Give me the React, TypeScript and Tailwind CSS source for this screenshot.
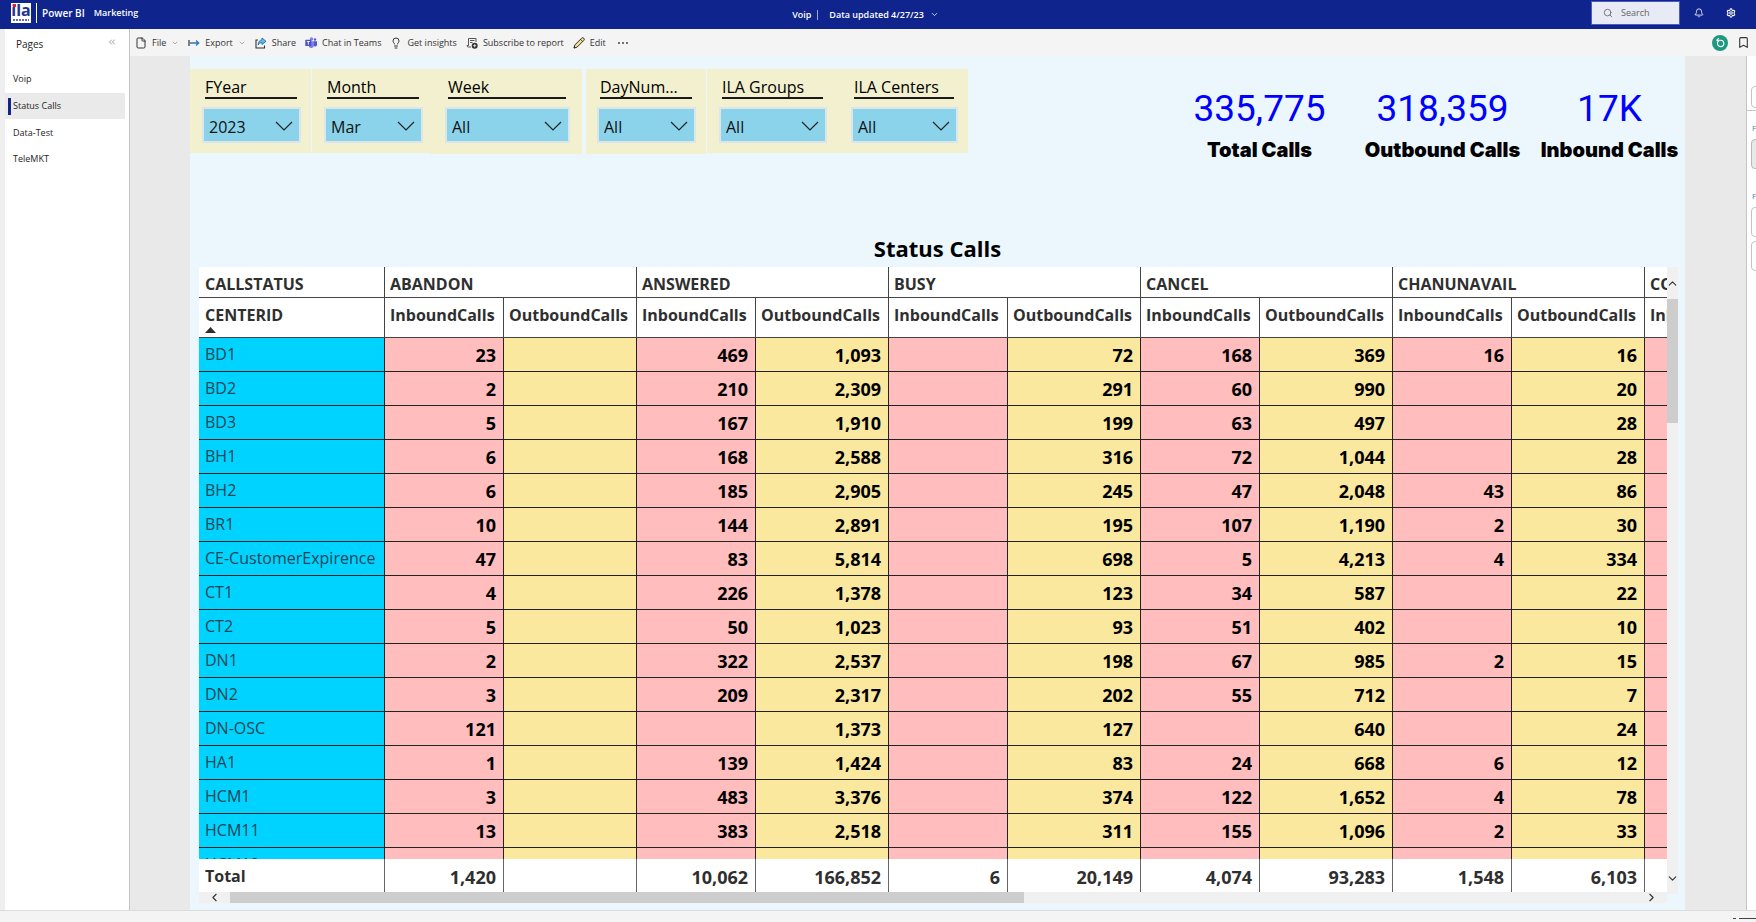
import type { ReactNode } from "react";
import { Bell, Bookmark, ChevronDown, ChevronLeft, ChevronRight, ChevronsLeft, ChevronUp, File, Lightbulb, Search, Settings } from "lucide-react";

const statuses = ["ABANDON", "ANSWERED", "BUSY", "CANCEL", "CHANUNAVAIL", "CONGESTION"];

const rows: [string, string[]][] = [
  ["BD1", ["23", "", "469", "1,093", "", "72", "168", "369", "16", "16", "", ""]],
  ["BD2", ["2", "", "210", "2,309", "", "291", "60", "990", "", "20", "", ""]],
  ["BD3", ["5", "", "167", "1,910", "", "199", "63", "497", "", "28", "", ""]],
  ["BH1", ["6", "", "168", "2,588", "", "316", "72", "1,044", "", "28", "", ""]],
  ["BH2", ["6", "", "185", "2,905", "", "245", "47", "2,048", "43", "86", "", ""]],
  ["BR1", ["10", "", "144", "2,891", "", "195", "107", "1,190", "2", "30", "", ""]],
  ["CE-CustomerExpirence", ["47", "", "83", "5,814", "", "698", "5", "4,213", "4", "334", "", ""]],
  ["CT1", ["4", "", "226", "1,378", "", "123", "34", "587", "", "22", "", ""]],
  ["CT2", ["5", "", "50", "1,023", "", "93", "51", "402", "", "10", "", ""]],
  ["DN1", ["2", "", "322", "2,537", "", "198", "67", "985", "2", "15", "", ""]],
  ["DN2", ["3", "", "209", "2,317", "", "202", "55", "712", "", "7", "", ""]],
  ["DN-OSC", ["121", "", "", "1,373", "", "127", "", "640", "", "24", "", ""]],
  ["HA1", ["1", "", "139", "1,424", "", "83", "24", "668", "6", "12", "", ""]],
  ["HCM1", ["3", "", "483", "3,376", "", "374", "122", "1,652", "4", "78", "", ""]],
  ["HCM11", ["13", "", "383", "2,518", "", "311", "155", "1,096", "2", "33", "", ""]],
  ["HCM12", ["", "", "", "", "", "", "", "", "", "", "", ""]],
];

const totals = ["1,420", "", "10,062", "166,852", "6", "20,149", "4,074", "93,283", "1,548", "6,103", "", ""];

const slicers = [
  { id: "fyear", label: "FYear", value: "2023", panel: "w-[121px] h-[84px] pl-3 pr-[10px] mr-px" },
  { id: "month", label: "Month", value: "Mar", panel: "w-[118px] h-[84px] pl-3 pr-[7px]" },
  { id: "week", label: "Week", value: "All", panel: "w-[152px] h-[85px] pl-[15px] pr-3 mr-1" },
  { id: "day", label: "DayNum...", value: "All", panel: "w-[120px] h-[85px] pl-[11px] pr-[10px] mr-px" },
  { id: "groups", label: "ILA Groups", value: "All", panel: "w-[132px] h-[84px] pl-3 pr-3" },
  { id: "centers", label: "ILA Centers", value: "All", panel: "w-[129px] h-[84px] pl-3 pr-[10px]" },
];

const kpis = [
  { value: "335,775", label: "Total Calls", width: "w-[183px]" },
  { value: "318,359", label: "Outbound Calls", width: "w-[183px]" },
  { value: "17K", label: "Inbound Calls", width: "w-[151px]" },
];

const pages = ["Voip", "Status Calls", "Data-Test", "TeleMKT"];

function ExportIcon() {
  return (
    <svg width="12" height="12" viewBox="0 0 12 12" fill="none">
      <path d="M1 3v6" stroke="#333" strokeWidth="1.200" />
      <path d="M1.500 6h9M8 3.500 10.700 6 8 8.500" stroke="#2b7ab5" strokeWidth="1.300" />
    </svg>
  );
}

function ShareIcon() {
  return (
    <svg width="12" height="12" viewBox="0 0 12 12" fill="none">
      <path d="M3 3H1v8h8.500V8.500" stroke="#333" strokeWidth="1.100" />
      <path d="M7 1l4 3.300-4 3.200V5.600C5 5.600 4 6.500 3.200 8 3.200 5 4.600 3.100 7 2.900z" fill="#6fb7e0" stroke="#1f6fa8" strokeWidth="0.900" strokeLinejoin="round" />
    </svg>
  );
}

function TeamsIcon() {
  return (
    <svg width="12" height="12" viewBox="0 0 12 12">
      <circle cx="6.500" cy="2" r="1.700" fill="#7b83eb" />
      <circle cx="10" cy="2.500" r="1.200" fill="#5059c9" />
      <path d="M8.500 4.200H12v3.600a1.800 1.800 0 0 1-3.500.5z" fill="#5059c9" />
      <path d="M4 4.200h5v4.300a2.800 2.800 0 0 1-5 1.500z" fill="#7b83eb" />
      <rect x="0.300" y="2.800" width="6" height="6.200" rx="0.600" fill="#4b53bc" />
      <path d="M1.800 4.500h3M3.300 4.500v3.300" stroke="#fff" strokeWidth="0.900" />
    </svg>
  );
}

function SubscribeIcon() {
  return (
    <svg width="12" height="12" viewBox="0 0 12 12" fill="none">
      <path d="M5 10H2.500A1.500 1.500 0 0 1 1 8.500h1.500V1.500H10V5M4 3.500h4.500M4 5.500h2.500" stroke="#555" strokeWidth="1" />
      <circle cx="8.700" cy="8.700" r="3" fill="#333" />
      <path d="M8.700 7.200v3M7.200 8.700h3" stroke="#fff" strokeWidth="0.800" />
    </svg>
  );
}

function PencilIcon() {
  return (
    <svg width="12" height="12" viewBox="0 0 12 12" fill="none">
      <path d="M1 11l.8-3L8.600 1.200a1.400 1.400 0 0 1 2.200 2.200L4 10.200z" fill="#f7dc8a" stroke="#333" strokeWidth="1" strokeLinejoin="round" />
      <path d="M7.500 2.300l2.200 2.200M1 11l.5-1.500L2.500 10.500z" stroke="#333" strokeWidth="0.900" />
    </svg>
  );
}

function Tool({ icon, label, menu }: { icon: ReactNode; label: string; menu?: boolean }) {
  return (
    <button type="button" className="flex items-center gap-[5px]">
      {icon}
      <span>{label}</span>
      {menu && <ChevronDown size={8} className="text-[#888]" />}
    </button>
  );
}

function TopBar() {
  return (
    <header className="flex h-[29px] shrink-0 items-center bg-[#10248e] text-[9px] font-semibold text-white">
      <div className="flex h-full flex-1 items-center pb-[3px] pl-[11px]">
        <div className="relative flex h-5 w-5 flex-col items-center bg-white">
          <span className="text-[16px] leading-[14px] font-bold text-[#25348f]">ila</span>
          <svg className="absolute inset-0" width="20" height="20" viewBox="0 0 20 20">
            <rect x="2" y="1" width="3" height="3" fill="#e5202e" />
            <path d="M2 17h16" stroke="#25348f" strokeWidth="2" strokeDasharray="2 1" opacity="0.700" />
          </svg>
        </div>
        <div className="ml-[5px] h-5 w-px bg-white" />
        <span className="ml-[5px] text-[10px]">Power BI</span>
        <span className="ml-[9px]">Marketing</span>
      </div>
      <button type="button" className="flex items-center gap-[6px] pr-4">
        <span>Voip</span>
        <span className="h-[10px] w-px bg-[#9aa4dc]" />
        <span className="ml-[5px]">Data updated 4/27/23</span>
        <ChevronDown size={9} />
      </button>
      <div className="flex h-full flex-1 items-start justify-end pt-px pr-5">
        <label className="flex h-6 w-[89px] items-center gap-2 border border-[#4a5bc4] bg-[#e8eaf5] pl-[11px]">
          <Search size={10} className="shrink-0 text-[#666]" />
          <input type="search" aria-label="Search" placeholder="Search" className="w-full min-w-0 bg-transparent text-[9px] font-normal outline-none placeholder:text-[#666]" />
        </label>
        <button type="button" aria-label="Notifications" className="ml-[14px] flex h-6 items-center"><Bell size={10} /></button>
        <button type="button" aria-label="Settings" className="ml-[22px] flex h-6 items-center"><Settings size={10} strokeWidth={2.500} /></button>
      </div>
    </header>
  );
}

function Sidebar() {
  return (
    <nav className="flex w-[130px] shrink-0 flex-col border-r border-l-[5px] border-r-[#c4c4c4] border-l-[#efefef] bg-white text-[9px] text-[#252423]">
      <div className="flex h-[35px] items-start justify-between pt-2 pr-3 pl-[11px]">
        <h2 className="text-[10px] leading-[14px]">Pages</h2>
        <button type="button" aria-label="Collapse pages"><ChevronsLeft size={10} className="text-[#8a8a8a]" /></button>
      </div>
      <ul className="mr-1 flex flex-col pt-[2px]">
        {pages.map((p) => (
          <li key={p}>
            <a href="#" className={`flex h-[26px] items-center gap-[2px] pl-[3px] ${p === "Status Calls" ? "my-px bg-[#eaeaea]" : ""}`}>
              <span className={`h-[17px] w-[3px] ${p === "Status Calls" ? "bg-[#10248e]" : ""}`} />
              {p}
            </a>
          </li>
        ))}
      </ul>
    </nav>
  );
}

function Toolbar() {
  return (
    <div className="flex h-[27px] shrink-0 items-center gap-[9px] bg-[#f4f4f4] pr-[6px] pl-[5px] text-[9px] text-[#333]">
      <Tool icon={<File size={12} className="text-[#333]" />} label="File" menu />
      <Tool icon={<ExportIcon />} label="Export" menu />
      <Tool icon={<ShareIcon />} label="Share" />
      <Tool icon={<TeamsIcon />} label="Chat in Teams" />
      <Tool icon={<Lightbulb size={12} className="text-[#333]" />} label="Get insights" />
      <Tool icon={<SubscribeIcon />} label="Subscribe to report" />
      <Tool icon={<PencilIcon />} label="Edit" />
      <button type="button" aria-label="More options" className="ml-[3px]">
        <svg width="10" height="4" viewBox="0 0 10 4" fill="#333">
          <circle cx="1" cy="2" r="0.900" /><circle cx="5" cy="2" r="0.900" /><circle cx="9" cy="2" r="0.900" />
        </svg>
      </button>
      <button type="button" aria-label="Reset to default" className="ml-auto">
        <svg width="16" height="16" viewBox="0 0 16 16" fill="none">
          <circle cx="8" cy="8" r="8" fill="#1f9781" />
          <path d="M5.500 7v1.500a3.200 3.200 0 1 0 3-3.300H5M6.800 3.200 4.800 5.200l2 2" stroke="#fff" strokeWidth="1.100" />
        </svg>
      </button>
      <button type="button" aria-label="Bookmarks"><Bookmark size={13} className="text-[#333]" /></button>
    </div>
  );
}

function Slicers() {
  return (
    <div className="flex items-start">
      {slicers.map((s) => (
        <div key={s.id} className={`flex flex-col bg-[#f3f0cf] pt-[7px] text-[16px] text-black ${s.panel}`}>
          <label htmlFor={s.id} className="mr-1 ml-[3px] h-[23px] border-b-2 border-[#1a1a1a] leading-[23px]">{s.label}</label>
          <div className="relative mt-2 h-[36px] border-2 border-[#dae6ea] bg-[#8ad3eb]">
            <select id={s.id} defaultValue={s.value} className="h-full w-full appearance-none bg-transparent pt-[3px] pl-[5px] text-[#111] outline-none">
              <option>{s.value}</option>
            </select>
            <svg className="pointer-events-none absolute top-3 right-[6px]" width="18" height="10" viewBox="0 0 18 10" fill="none">
              <path d="M1 1l8 8 8-8" stroke="#222" strokeWidth="1.200" />
            </svg>
          </div>
        </div>
      ))}
    </div>
  );
}

function StatusTable() {
  return (
    <div className="mr-[7px] ml-[9px] flex min-h-0 flex-1">
      <div className="flex min-w-0 flex-1 flex-col">
        <div className="min-h-0 flex-1 overflow-hidden bg-white">
          <table className="w-[1698px] table-fixed border-separate border-spacing-0 text-[#2f2f2f]">
            <colgroup>
              <col className="w-[186px]" />
              {statuses.flatMap((s) => [<col key={s + "in"} className="w-[119px]" />, <col key={s + "out"} className="w-[133px]" />])}
            </colgroup>
            <thead className="text-left text-[16px]">
              <tr>
                <th scope="col" className="h-[31px] border-r border-b border-[#444] pt-1 pl-[6px] font-bold">CALLSTATUS</th>
                {statuses.map((s) => (
                  <th key={s} scope="colgroup" colSpan={2} className="h-[31px] border-r border-b border-[#444] pt-1 pl-[5px] font-bold">{s}</th>
                ))}
              </tr>
              <tr>
                <th scope="col" aria-sort="ascending" className="h-10 border-r border-b border-[#444] pt-[5px] pl-[6px] align-top leading-[24px] font-bold">
                  CENTERID
                  <svg width="11" height="6" viewBox="0 0 11 6" className="block"><path d="M0 6l5.500-6L11 6z" fill="#2f2f2f" /></svg>
                </th>
                {statuses.flatMap((s) =>
                  ["InboundCalls", "OutboundCalls"].map((m) => (
                    <th key={s + m} scope="col" className="border-r border-b border-[#444] pt-[5px] pl-[5px] align-top leading-[24px] font-bold">{m}</th>
                  )),
                )}
              </tr>
            </thead>
            <tbody>
              {rows.map(([name, cells]) => (
                <tr key={name}>
                  <th scope="row" className="h-[34px] border-r border-b border-[#222] bg-[#00d3ff] pb-[2px] pl-[6px] text-left text-[16px] font-normal text-[#1f4552]">{name}</th>
                  {cells.map((c, i) => (
                    <td key={i} className={`border-r border-b border-[#222] pt-px pr-[7px] text-right text-[18px] leading-[24px] font-bold text-black ${i % 2 === 0 ? "bg-[#ffbdbe]" : "bg-[#fbe89f]"}`}>{c}</td>
                  ))}
                </tr>
              ))}
            </tbody>
            <tfoot>
              <tr>
                <th scope="row" className="sticky bottom-0 h-[33px] border-r border-[#666] bg-white pl-[6px] text-left text-[16px] font-bold">Total</th>
                {totals.map((c, i) => (
                  <td key={i} className="sticky bottom-0 border-r border-[#666] bg-white pt-[2px] pr-[7px] text-right text-[18px] leading-[24px] font-bold">{c}</td>
                ))}
              </tr>
            </tfoot>
          </table>
        </div>
        <div className="flex h-[11px] shrink-0 items-center bg-[#f0f0f0] text-[#333]">
          <button type="button" aria-label="Scroll left" className="flex w-[31px] justify-center"><ChevronLeft size={13} /></button>
          <div className="h-full flex-1"><div className="h-full w-[56.500%] bg-[#cdcdcd]" /></div>
          <button type="button" aria-label="Scroll right" className="flex w-[31px] justify-center"><ChevronRight size={13} /></button>
        </div>
      </div>
      <div className="mb-[9px] flex w-[11px] shrink-0 flex-col bg-[#f0f0f0] text-[#333]">
        <button type="button" aria-label="Scroll up" className="flex h-8 items-center justify-center"><ChevronUp size={13} className="shrink-0" /></button>
        <div className="flex-1"><div className="h-[22%] bg-[#cdcdcd]" /></div>
        <button type="button" aria-label="Scroll down" className="flex h-8 items-center justify-center"><ChevronDown size={13} className="shrink-0" /></button>
      </div>
    </div>
  );
}

function FilterPane() {
  return (
    <aside className="flex w-[10px] shrink-0 flex-col overflow-hidden border-l border-[#c4c4c4] bg-white text-[8px] leading-[12px] text-[#4a7fae]">
      <div className="h-[55px] shrink-0 border-b border-[#c4c4c4] pt-[30px] pl-1"><div className="h-[22px] w-10 rounded-sm border border-[#c4c4c4]" /></div>
      <div className="shrink-0 pt-[11px] pl-[5px]">Filters</div>
      <div className="mt-[5px] ml-1 h-[30px] w-10 shrink-0 rounded-sm border border-[#b8b8b8] bg-[#e9e9e9]" />
      <div className="shrink-0 pt-[21px] pl-[5px]">Filters</div>
      <div className="mt-[5px] ml-1 h-[30px] w-10 shrink-0 rounded-sm border border-[#c4c4c4]" />
      <div className="mt-1 ml-1 h-[30px] w-10 shrink-0 rounded-sm border border-[#c4c4c4]" />
    </aside>
  );
}

export default function App() {
  return (
    <div className="flex h-screen flex-col overflow-hidden bg-[#f4f4f4] font-['Open_Sans','Noto_Sans',sans-serif]">
      <TopBar />
      <div className="flex min-h-0 flex-1">
        <Sidebar />
        <div className="flex min-w-0 flex-1 flex-col">
          <Toolbar />
          <div className="flex min-h-0 flex-1 bg-[#e9e9e9]">
            <main className="mr-[61px] ml-[60px] flex min-w-0 flex-1 flex-col bg-[#ebf7fd] pt-[13px] pb-[7px]">
              <div className="flex h-[163px] shrink-0 items-start justify-between">
                <Slicers />
                <dl className="flex pt-4">
                  {kpis.map((k) => (
                    <div key={k.label} className={`flex flex-col-reverse items-center ${k.width}`}>
                      <dt className="mt-[5px] font-['Inter',sans-serif] text-[20px] leading-[24px] font-black whitespace-nowrap text-black">{k.label}</dt>
                      <dd className="font-['Roboto',sans-serif] text-[37px] leading-[48px] text-[#0000ff]">{k.value}</dd>
                    </div>
                  ))}
                </dl>
              </div>
              <h1 className="h-[35px] shrink-0 text-center text-[22px] leading-[32px] font-bold text-black">Status Calls</h1>
              <StatusTable />
            </main>
            <FilterPane />
          </div>
        </div>
      </div>
      <footer className="flex h-3 shrink-0 items-center justify-end gap-[3px] border-t border-[#dcdcdc] bg-[#f4f4f4] pt-1">
        <span className="h-px w-[3px] bg-[#444]" />
        <span className="h-px w-[17px] bg-[#444]" />
      </footer>
    </div>
  );
}
